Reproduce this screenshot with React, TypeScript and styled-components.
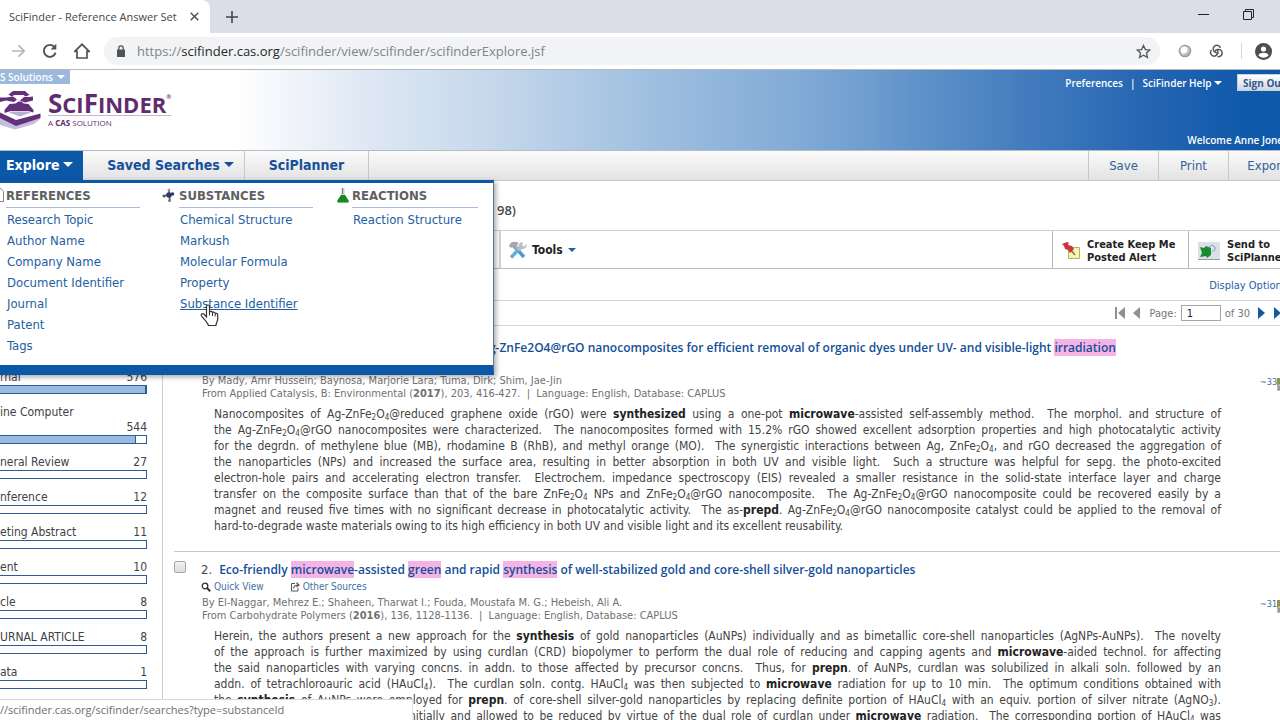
import React from "react";
import styled, { createGlobalStyle, css } from "styled-components";

const blue = "#0b57a8";
const link = "#24609f";
const ui = `"DejaVu Sans Condensed", "Noto Sans", "Liberation Sans", sans-serif`;
const chromeFont = `"Open Sans", "Noto Sans", sans-serif`;

const Global = createGlobalStyle`
  *, *::before, *::after { box-sizing: border-box; }
  html, body { margin: 0; height: 100%; }
  #root { height: 100%; }
  body { font-family: ${ui}; font-size: 12px; color: #444; background: #fff; }
  a { color: inherit; text-decoration: none; }
  button { font: inherit; color: inherit; background: none; border: 0; padding: 0; margin: 0; cursor: pointer; }
  h1, h2, h3, p, ul { margin: 0; padding: 0; font-weight: normal; }
  ul { list-style: none; }
`;

const Frame = styled.div`
  position: relative;
  display: flex;
  flex-direction: column;
  height: 100vh;
  overflow: hidden;
`;

/* browser window */

const TabStrip = styled.div`
  display: flex;
  flex: none;
  height: 33px;
  background: #dcdde6;
`;

const BrowserTab = styled.div`
  display: flex;
  align-items: center;
  justify-content: space-between;
  width: 210px;
  padding: 0 11px 0 9px;
  background: #fff;
  border-top-right-radius: 8px;
  font-family: ${chromeFont};
  font-size: 11px;
  color: #45474c;
  white-space: nowrap;
`;

const TabButton = styled.button`
  display: flex;
  align-items: center;
  justify-content: center;
`;

const NewTab = styled(TabButton)`
  width: 44px;
`;

const WindowButtons = styled.div`
  display: flex;
  align-items: center;
  gap: 34px;
  margin-left: auto;
  padding: 0 26px 5px 0;
`;

const AddressRow = styled.div`
  display: flex;
  align-items: center;
  flex: none;
  height: 37px;
  padding: 0 8px 0 11px;
  border-bottom: 1px solid #b5b8bd;
  background: #fff;
`;

const NavIcons = styled.div`
  display: flex;
  align-items: center;
  gap: 16px;
  margin-right: 14px;
`;

const AddressBar = styled.label`
  display: flex;
  align-items: center;
  flex: 1;
  gap: 11px;
  height: 28px;
  padding: 0 9px 0 12px;
  border-radius: 14px;
  background: #f1f3f4;
`;

const UrlText = styled.span`
  flex: 1;
  font-family: ${chromeFont};
  font-size: 13px;
  color: #80848a;
  white-space: nowrap;
  b { font-weight: normal; color: #26282b; }
`;

const Extensions = styled.div`
  display: flex;
  align-items: center;
  gap: 17px;
  margin-left: 18px;
`;

const ToolbarRule = styled.span`
  width: 1px;
  height: 16px;
  margin-right: -4px;
  background: #d4d6da;
`;

const StatusBubble = styled.div`
  position: absolute;
  left: 0;
  bottom: 0;
  width: 413px;
  height: 21px;
  border-top: 1px solid #d8d8d8;
  border-right: 1px solid #e4e4e4;
  background: #fff;
  font-family: ${chromeFont};
  font-size: 11px;
  line-height: 20px;
  color: #6b6e72;
  white-space: nowrap;
`;

/* site header */

const Site = styled.div`
  display: flex;
  flex-direction: column;
  flex: 1;
  min-height: 0;
  margin-right: -24px;
`;

const Header = styled.header`
  display: flex;
  justify-content: space-between;
  flex: none;
  height: 80px;
  background: linear-gradient(90deg, #fff 0, #fff 18%, #dfe8f4 28%, #c8d9ec 37%, #9fbfe0 50%, #7fa9d5 62%, #4f86c3 75%, #2867b3 87%, #0f58aa 96%, #0f58aa 100%);
`;

const Brand = styled.div`
  display: flex;
  flex-direction: column;
  align-items: flex-start;
`;

const Solutions = styled.button`
  display: flex;
  align-items: center;
  gap: 4px;
  height: 14px;
  padding: 0 5px 0 0;
  background: #9bb9dc;
  color: #fff;
  font-family: ${chromeFont};
  font-size: 10px;
  line-height: 14px;
  font-weight: 600;
`;

const Logo = styled.div`
  display: flex;
  gap: 7px;
  padding-top: 6px;
`;

const LogoText = styled.div`
  color: #5f2c6f;
  font-family: ${chromeFont};
`;

const LogoName = styled.div`
  display: flex;
  align-items: baseline;
  height: 26px;
  border-bottom: 1px solid #c3b7cc;
  font-size: 22px;
  line-height: 26px;
  font-weight: 700;
  big { font-size: 26px; line-height: 26px; font-weight: 700; }
  small { font-size: 6px; align-self: flex-start; line-height: 14px; }
`;

const LogoTag = styled.div`
  font-size: 8px;
  line-height: 13px;
`;

const Account = styled.div`
  display: flex;
  flex-direction: column;
  justify-content: space-between;
  align-items: flex-end;
  padding: 4px 5px 3px 0;
  color: #fff;
  font-family: ${chromeFont};
  font-size: 10px;
  font-weight: 600;
  line-height: 14px;
`;

const AccountLinks = styled.div`
  display: flex;
  align-items: center;
  gap: 7px;
  height: 17px;
`;

const Welcome = styled.div`
  padding-right: 11px;
`;

const SignOut = styled.button`
  width: 62px;
  height: 17px;
  margin-left: 8px;
  padding: 0 5px;
  background: linear-gradient(#fff, #cfd6e2);
  border: 1px solid #c4cfdf;
  color: #32588c;
  font-weight: 700;
  text-align: left;
`;

const MainNav = styled.nav`
  position: relative;
  display: flex;
  flex: none;
  height: 31px;
  border-top: 1px solid #b5bcc6;
  border-bottom: 1px solid #c9c9c9;
  background: linear-gradient(#fbfbfb, #e2e2e2);
`;

const NavTab = styled.button<{ $open?: boolean; $menu?: boolean; $width: number }>`
  display: flex;
  align-items: center;
  justify-content: center;
  gap: 4px;
  width: ${(p) => p.$width}px;
  padding: 0 0 2px ${(p) => (p.$menu ? 14 : 0)}px;
  border-right: 1px solid #c4c7cb;
  font-size: 14px;
  font-weight: bold;
  color: #17509a;
  white-space: nowrap;
  ${(p) => p.$open && css`
    background: ${blue};
    border-color: ${blue};
    color: #fff;
    justify-content: flex-start;
    padding-left: 6px;
  `}
`;

const NavActions = styled.div`
  display: flex;
  margin-left: auto;
`;

const NavAction = styled.button`
  width: 70px;
  padding-bottom: 1px;
  border-left: 1px solid #c4c7cb;
  font-size: 13px;
  color: #33619a;
  &:last-child { width: 76px; }
`;

const Caret = styled.span<{ $size?: number }>`
  display: inline-block;
  vertical-align: 2px;
  border: ${(p) => p.$size ?? 5}px solid transparent;
  border-top-color: currentColor;
  border-bottom: 0;
`;

/* explore menu */

const Menu = styled.div`
  position: absolute;
  z-index: 2;
  top: 29px;
  left: 0;
  display: flex;
  width: 494px;
  height: 195px;
  border-top: 3px solid ${blue};
  border-bottom: 10px solid ${blue};
  border-right: 1px solid #5f7896;
  background: #fff;
  box-shadow: 2px 2px 5px rgba(0, 0, 0, 0.35);
`;

const MenuHeading = styled.h2`
  position: relative;
  width: 134px;
  height: 20px;
  border-bottom: 1px solid #a9bcdb;
  font-size: 13px;
  font-weight: bold;
  line-height: 16px;
  color: #5f6062;
  svg { position: absolute; right: 100%; top: 0; }
`;

const MenuGroup = styled.section`
  flex: none;
  width: 173px;
  padding: 5px 0 0 16px;
  &:first-child { width: 163px; padding-left: 6px; }
  &:last-of-type { width: 157px; }
  &:last-of-type ${MenuHeading} { width: 126px; }
`;

const MenuLink = styled.a<{ $hover?: boolean }>`
  display: block;
  padding-left: 1px;
  font-size: 13px;
  line-height: 21px;
  color: ${link};
  text-decoration: ${(p) => (p.$hover ? "underline" : "none")};
`;

const MenuList = styled.ul`
  padding-top: 1px;
`;

const Pointer = styled.svg`
  position: absolute;
  left: 200px;
  top: 121px;
`;

/* body */

const Body = styled.div`
  display: flex;
  flex: 1;
  min-height: 0;
`;

const Sidebar = styled.aside`
  flex: none;
  width: 163px;
  padding: 189px 15px 0 0;
  border-right: 1px solid #ccc;
`;

const Facet = styled.div`
  margin-bottom: 11px;
  color: #3e4247;
  font-size: 12px;
  line-height: 15px;
`;

const FacetLine = styled.div<{ $stacked?: boolean }>`
  display: flex;
  flex-direction: ${(p) => (p.$stacked ? "column" : "row")};
  justify-content: space-between;
  white-space: nowrap;
  span:last-child { align-self: flex-end; }
`;

const Track = styled.div`
  height: 9px;
  border: 1px solid #2c5c92;
  border-left: 0;
`;

const Fill = styled.div`
  height: 7px;
  border-right: 1px solid #2c5c92;
  background: #9bbae2;
`;

const Main = styled.main`
  flex: 1;
  min-width: 0;
`;

const PageTitle = styled.h1`
  height: 50px;
  padding-left: 334px;
  border-bottom: 1px solid #d0d0d0;
  font-family: ${chromeFont};
  font-size: 13px;
  font-weight: 600;
  line-height: 58px;
  color: #4a4a4a;
`;

const Tools = styled.div`
  display: flex;
  height: 38px;
  border-bottom: 1px solid #bdbdbd;
  color: #222;
  font-size: 12px;
  font-weight: bold;
  line-height: 13px;
`;

const ToolsMenu = styled.button`
  display: flex;
  align-items: center;
  gap: 5px;
  margin-left: 336px;
  padding: 1px 0 0 8px;
  border-left: 2px solid #d4d4d4;
`;

const ToolButton = styled.button<{ $width: number }>`
  display: flex;
  align-items: center;
  gap: 7px;
  width: ${(p) => p.$width}px;
  padding: 3px 0 0 9px;
  border-left: 1px solid #b8b8b8;
  text-align: left;
  font-size: 11px;
`;

const ToolGroup = styled.div`
  display: flex;
  margin-left: auto;
`;

const DisplayOptions = styled.div`
  display: flex;
  justify-content: flex-end;
  height: 32px;
  padding-right: 17px;
  border-bottom: 1px solid #d4d4d4;
  font-size: 11px;
  line-height: 34px;
  color: ${link};
`;

const Pager = styled.div`
  display: flex;
  align-items: center;
  justify-content: flex-end;
  gap: 8px;
  height: 25px;
  padding-right: 20px;
  border-bottom: 1px solid #d4d4d4;
  font-size: 11px;
  color: #777;
  label { display: flex; align-items: center; gap: 4px; }
`;

const PageTotal = styled.span`
  margin-left: -4px;
`;

const PageInput = styled.input`
  width: 40px;
  height: 16px;
  padding: 0 5px;
  border: 1px solid #a5a5a5;
  font: inherit;
  color: #222;
`;

const PagerButton = styled.button`
  display: flex;
`;

const Result = styled.article`
  display: flex;
  margin-left: 11px;
  padding: 9px 0 17px;
  border-bottom: 1px solid #c8c8c8;
  &:first-of-type { padding-top: 13px; }
`;

const Check = styled.input`
  flex: none;
  appearance: none;
  width: 12px;
  height: 12px;
  margin: 0 15px 0 0;
  border: 1px solid #a8a8a8;
  border-radius: 2px;
  background: linear-gradient(#f2f2f2, #dcdcdc);
`;

const ResultText = styled.div`
  flex: 1;
  min-width: 0;
`;

const ResultTitle = styled.h2`
  display: flex;
  gap: 7px;
  font-size: 13px;
  line-height: 17px;
  white-space: nowrap;
  color: #444;
  a { color: #134f98; font-family: ${chromeFont}; font-size: 12px; font-weight: 600; }
  mark { background: #f6b3e6; color: inherit; }
`;

const QuickLinks = styled.div`
  display: flex;
  gap: 26px;
  height: 18px;
  font-size: 10px;
  line-height: 17px;
  color: #44719f;
  a { display: flex; align-items: center; gap: 3px; height: 17px; }
`;

const Meta = styled.p`
  font-size: 11px;
  line-height: 13px;
  color: #707070;
  padding-left: 1px;
  white-space: nowrap;
`;

const Source = styled(Meta)`
  margin-bottom: 6px;
`;

const Abstract = styled.p`
  padding-left: 13px;
  font-size: 12px;
  line-height: 16px;
  color: #444;
  b { color: #222; }
  sub { font-size: 8px; line-height: 0; vertical-align: -2px; }
`;

const Line = styled.span<{ $last?: boolean }>`
  display: block;
  text-align: justify;
  text-align-last: ${(p) => (p.$last ? "left" : "justify")};
`;

const Citing = styled.a`
  display: flex;
  flex: none;
  align-items: flex-start;
  width: 83px;
  padding: 38px 0 0 39px;
  font-size: 9px;
  line-height: 10px;
  color: #44719f;
`;

const Fe = () => <>ZnFe<sub>2</sub>O<sub>4</sub></>;
const Gold = () => <>HAuCl<sub>4</sub></>;
const gap = "\u00a0 ";

const facets: { label: string; count: number; fill: number; stacked?: boolean }[] = [
  { label: "rnal", count: 576, fill: 100 },
  { label: "ine Computer", count: 544, fill: 93, stacked: true },
  { label: "neral Review", count: 27, fill: 0 },
  { label: "nference", count: 12, fill: 0 },
  { label: "eting Abstract", count: 11, fill: 0 },
  { label: "ent", count: 10, fill: 0 },
  { label: "cle", count: 8, fill: 0 },
  { label: "URNAL ARTICLE", count: 8, fill: 0 },
  { label: "ata", count: 1, fill: 0 },
];

const first: React.ReactNode[] = [
  <>Nanocomposites of Ag-<Fe />@reduced graphene oxide (rGO) were <b>synthesized</b> using a one-pot <b>microwave</b>-assisted self-assembly method.{gap}The morphol. and structure of</>,
  <>the Ag-<Fe />@rGO nanocomposites were characterized.{gap}The nanocomposites formed with 15.2% rGO showed excellent adsorption properties and high photocatalytic activity</>,
  <>for the degrdn. of methylene blue (MB), rhodamine B (RhB), and methyl orange (MO).{gap}The synergistic interactions between Ag, <Fe />, and rGO decreased the aggregation of</>,
  <>the nanoparticles (NPs) and increased the surface area, resulting in better absorption in both UV and visible light.{gap}Such a structure was helpful for sepg. the photo-excited</>,
  <>electron-hole pairs and accelerating electron transfer.{gap}Electrochem. impedance spectroscopy (EIS) revealed a smaller resistance in the solid-state interface layer and charge</>,
  <>transfer on the composite surface than that of the bare <Fe /> NPs and <Fe />@rGO nanocomposite.{gap}The Ag-<Fe />@rGO nanocomposite could be recovered easily by a</>,
  <>magnet and reused five times with no significant decrease in photocatalytic activity.{gap}The as-<b>prepd</b>. Ag-<Fe />@rGO nanocomposite catalyst could be applied to the removal of</>,
  <>hard-to-degrade waste materials owing to its high efficiency in both UV and visible light and its excellent reusability.</>,
];

const second: React.ReactNode[] = [
  <>Herein, the authors present a new approach for the <b>synthesis</b> of gold nanoparticles (AuNPs) individually and as bimetallic core-shell nanoparticles (AgNPs-AuNPs).{gap}The novelty</>,
  <>of the approach is further maximized by using curdlan (CRD) biopolymer to perform the dual role of reducing and capping agents and <b>microwave</b>-aided technol. for affecting</>,
  <>the said nanoparticles with varying concns. in addn. to those affected by precursor concns.{gap}Thus, for <b>prepn</b>. of AuNPs, curdlan was solubilized in alkali soln. followed by an</>,
  <>addn. of tetrachloroauric acid (<Gold />).{gap}The curdlan soln. contg. <Gold /> was then subjected to <b>microwave</b> radiation for up to 10 min.{gap}The optimum conditions obtained with</>,
  <>the <b>synthesis</b> of AuNPs were employed for <b>prepn</b>. of core-shell silver-gold nanoparticles by replacing definite portion of <Gold /> with an equiv. portion of silver nitrate (AgNO<sub>3</sub>).</>,
  <>The portion of AgNO<sub>3</sub> was added initially and allowed to be reduced by virtue of the dual role of curdlan under <b>microwave</b> radiation.{gap}The corresponding portion of <Gold /> was</>,
];

const Lines = ({ lines, open }: { lines: React.ReactNode[]; open?: boolean }) => (
  <Abstract>
    {lines.map((l, i) => <Line key={i} $last={!open && i === lines.length - 1}>{l}</Line>)}
  </Abstract>
);

const LensIcon = () => (
  <svg width="10" height="10" viewBox="0 0 10 10" fill="none" stroke="#333">
    <circle cx="4" cy="4" r="2.8" strokeWidth="1.3" /><path d="M6 6l3.2 3.2" strokeWidth="2" />
  </svg>
);

const SourceIcon = () => (
  <svg width="10" height="10" viewBox="0 0 10 10" fill="none" stroke="#555">
    <path d="M5 1.500H1.500V9H8V6" /><path d="M3.500 6.500C4 4 5.500 3 8 3M6.500 .8L9 3 6.500 5" strokeWidth="1.200" />
  </svg>
);

const CitingIcon = () => (
  <svg width="14" height="16" viewBox="0 0 14 16">
    <path d="M0 4l3-3h9v13H0z" fill="#b9b9c4" /><path d="M0 1h9v6H2L0 9z" fill="#9a9344" /><path d="M1 10h10M1 12h10" stroke="#777" />
  </svg>
);

const PagerIcon = ({ back, edge }: { back?: boolean; edge?: boolean }) => (
  <svg width={edge ? 10 : 8} height="14" viewBox={edge ? "0 0 10 14" : "0 0 8 14"} fill={back ? "#8e9092" : "#12599f"}>
    {back
      ? <><path d={edge ? "M10 1v12L3 7z" : "M7 1v12L0 7z"} />{edge && <path d="M0 1h2v12H0z" />}</>
      : <><path d="M0 1v12l7-6z" />{edge && <path d="M8 1h2v12H8z" />}</>}
  </svg>
);

export default function App() {
  return (
    <Frame>
      <Global />
      <TabStrip>
        <BrowserTab>
          <span>SciFinder - Reference Answer Set</span>
          <TabButton aria-label="Close tab">
            <svg width="9" height="9" viewBox="0 0 9 9" stroke="#4a4d52" strokeWidth="1.400"><path d="M.7.7l7.600 7.600M8.300.7L.7 8.300" /></svg>
          </TabButton>
        </BrowserTab>
        <NewTab aria-label="New tab">
          <svg width="12" height="12" viewBox="0 0 12 12" stroke="#44474c" strokeWidth="1.600"><path d="M6 0v12M0 6h12" /></svg>
        </NewTab>
        <WindowButtons>
          <TabButton aria-label="Minimize">
            <svg width="11" height="11" viewBox="0 0 11 11" stroke="#222"><path d="M0 5.500h11" /></svg>
          </TabButton>
          <TabButton aria-label="Restore">
            <svg width="11" height="11" viewBox="0 0 11 11" stroke="#222" fill="none"><path d="M.5 2.500h8v8h-8zM2.500 2.500v-2h8v8h-2" /></svg>
          </TabButton>
        </WindowButtons>
      </TabStrip>
      <AddressRow>
        <NavIcons>
          <TabButton aria-label="Forward">
            <svg width="15" height="14" viewBox="0 0 15 14" fill="none" stroke="#b4b6b9" strokeWidth="1.700"><path d="M1 7h12M7.500 1.300L13.200 7l-5.700 5.700" /></svg>
          </TabButton>
          <TabButton aria-label="Reload">
            <svg width="16" height="16" viewBox="0 0 16 16" fill="none" stroke="#4f5257" strokeWidth="1.900"><path d="M13.600 9.600A6 6 0 1 1 12.400 3.900" /><path d="M14.300 .8V6.500H8.600z" fill="#4f5257" stroke="none" /></svg>
          </TabButton>
          <TabButton aria-label="Home">
            <svg width="16" height="16" viewBox="0 0 16 16" fill="none" stroke="#4f5257" strokeWidth="1.700"><path d="M.8 8.300L8 1.300l7.200 7H13V15H3V8.300z" /></svg>
          </TabButton>
        </NavIcons>
        <AddressBar>
          <svg width="10" height="12" viewBox="0 0 10 12"><path d="M1 4.500h8V12H1z" fill="#505358" /><path d="M2.800 5V3a2.200 2.200 0 0 1 4.400 0v2" fill="none" stroke="#505358" strokeWidth="1.300" /></svg>
          <UrlText>https://<b>scifinder.cas.org</b>/scifinder/view/scifinder/scifinderExplore.jsf</UrlText>
          <svg width="15" height="15" viewBox="0 0 16 16" fill="none" stroke="#55585d" strokeWidth="1.400"><path d="M8 1.500l2 4.400 4.700.5-3.500 3.200 1 4.700L8 11.900l-4.200 2.400 1-4.700L1.300 6.400 6 5.900z" /></svg>
        </AddressBar>
        <Extensions>
          <svg width="14" height="14" viewBox="0 0 14 14"><circle cx="7" cy="7" r="5.500" fill="#ddd" stroke="#9c9c9c" strokeWidth="1.600" /><circle cx="5.800" cy="5.800" r="3.200" fill="#fff" /><path d="M11 6a5 5 0 0 1-5 5" stroke="#b5b5b5" strokeWidth="2" fill="none" /></svg>
          <svg width="15" height="15" viewBox="0 0 15 15" fill="none" stroke="#55585d" strokeWidth="1.500" strokeLinecap="round">
            {[0, 120, 240].map((r) => <path key={r} transform={`rotate(${r} 7.5 7.5)`} d="M8.800 9.200C5.600 8.800 3.200 6 4.600 3.200 6 .6 10 .8 11.200 3.400" />)}
          </svg>
          <ToolbarRule />
          <svg width="17" height="17" viewBox="0 0 17 17"><circle cx="8.500" cy="8.500" r="8.500" fill="#4b4e53" /><circle cx="8.500" cy="6" r="2.600" fill="#fff" /><path d="M3.300 12.300c1.200-3.300 9.200-3.300 10.400 0-2.400 3.200-8 3.200-10.400 0z" fill="#fff" /></svg>
        </Extensions>
      </AddressRow>

      <Site>
        <Header>
          <Brand>
            <Solutions>S Solutions <Caret $size={4} /></Solutions>
            <Logo>
              <svg width="41" height="40" viewBox="0 0 41 40">
                <path d="M0 27l16 6 24-7v3l-6 5-19 5.500L0 35z" fill="#c5bddd" />
                <path d="M8.500 4.500L13 1h12l4.500 4-4 1.500-2-1.500h-9l-3 1.500z" fill="#65307a" />
                <path d="M0 7.500h6l7-1 4 3-3 2.500L6 10.500 0 12z" fill="#65307a" />
                <path d="M20 10.500L24 7h5l4-.5v4L25 12.500z" fill="#65307a" />
                <path d="M4.500 20l5-6 6-.5 3-2h3l2 2 5 .5 5 6v2.500L28 21H11l-6.500 2z" fill="#65307a" />
                <path d="M9 22.500l3-1h15l4 1-11 4z" fill="#b9afd4" />
                <path d="M0 22.500l16 7.500 24.500-6.500v4.500L16 36 0 28z" fill="#65307a" />
              </svg>
              <LogoText>
                <LogoName><big>S</big>CI<big>F</big>INDER<small>®</small></LogoName>
                <LogoTag>A <b>CAS</b> SOLUTION</LogoTag>
              </LogoText>
            </Logo>
          </Brand>
          <Account>
            <AccountLinks>
              <a href="#preferences">Preferences</a>
              <span>|</span>
              <a href="#help">SciFinder Help <Caret $size={4} /></a>
              <SignOut>Sign Out</SignOut>
            </AccountLinks>
            <Welcome>Welcome Anne Jones</Welcome>
          </Account>
        </Header>

        <MainNav>
          <NavTab $open $width={83}>Explore <Caret /></NavTab>
          <NavTab $menu $width={162}>Saved Searches <Caret /></NavTab>
          <NavTab $width={124}>SciPlanner</NavTab>
          <NavActions>
            <NavAction>Save</NavAction>
            <NavAction>Print</NavAction>
            <NavAction>Export</NavAction>
          </NavActions>
          <Menu>
            <MenuGroup>
              <MenuHeading>
                <svg width="12" height="14" viewBox="0 0 12 14"><path d="M2 .5h5l2.500 3v10H2z" fill="#fff" stroke="#888" /></svg>
                REFERENCES
              </MenuHeading>
              <MenuList>
                {["Research Topic", "Author Name", "Company Name", "Document Identifier", "Journal", "Patent", "Tags"].map((t) => (
                  <li key={t}><MenuLink href="#">{t}</MenuLink></li>
                ))}
              </MenuList>
            </MenuGroup>
            <MenuGroup>
              <MenuHeading>
                <svg width="17" height="15" viewBox="0 0 17 15" fill="#2c3e66">
                  <path d="M7 6.500L2 8M7 6.500V2M7 6.500l4-1M7 6.500l1 6" strokeWidth="1.600" stroke="#555" />
                  <circle cx="7" cy="7" r="2.800" /><circle cx="2" cy="8" r="1.500" fill="#555" /><circle cx="10.500" cy="6" r="1.800" /><circle cx="7" cy="2" r="1.500" fill="#999" /><circle cx="7.500" cy="12.500" r="1.500" fill="#777" />
                </svg>
                SUBSTANCES
              </MenuHeading>
              <MenuList>
                {["Chemical Structure", "Markush", "Molecular Formula", "Property", "Substance Identifier"].map((t) => (
                  <li key={t}><MenuLink href="#" $hover={t === "Substance Identifier"}>{t}</MenuLink></li>
                ))}
              </MenuList>
            </MenuGroup>
            <MenuGroup>
              <MenuHeading>
                <svg width="15" height="15" viewBox="0 0 15 15"><path d="M4.500 0h3v6l4 6.500c.6 1.500 0 2-1 2h-9c-1 0-1.600-.5-1-2l4-6.500z" fill="#c3d8c3" /><path d="M4 7h4l3.500 5.500c.6 1.500 0 2-1 2h-9c-1 0-1.600-.5-1-2z" fill="#178a1d" /><path d="M5.500 0v6" stroke="#777" /></svg>
                REACTIONS
              </MenuHeading>
              <MenuList>
                <li><MenuLink href="#">Reaction Structure</MenuLink></li>
              </MenuList>
            </MenuGroup>
            <Pointer width="19" height="23" viewBox="0 0 19 23">
              <path d="M6.500 13V2.500c0-2 3-2 3 0V8c1-1 2.800-.7 3 .6 1-.8 2.500-.3 2.700.9 1.300-.6 2.500.2 2.500 1.500V15c0 2.500-1.700 3.500-1.700 6.500H8.500c-.5-2-2-3.500-3.500-5.500L1.500 11.800c-1-1.500.8-3 2.300-1.800z" fill="#fff" stroke="#333" strokeWidth="1.200" />
              <path d="M9.500 8v3.500M12.500 9v3M15.200 10v2.500" stroke="#333" />
            </Pointer>
          </Menu>
        </MainNav>

        <Body>
          <Sidebar>
            {facets.map((f) => (
              <Facet key={f.label}>
                <FacetLine $stacked={f.stacked}><span>{f.label}</span><span>{f.count}</span></FacetLine>
                <Track>{f.fill > 0 && <Fill style={{ width: `${f.fill}%` }} />}</Track>
              </Facet>
            ))}
          </Sidebar>
          <Main>
            <PageTitle>98)</PageTitle>
            <Tools>
              <ToolsMenu>
                <svg width="18" height="18" viewBox="0 0 18 18" fill="none">
                  <path d="M4 4l11 12" stroke="#4f9bd3" strokeWidth="3.500" /><path d="M13 5L2 16.500" stroke="#62addf" strokeWidth="3.500" />
                  <path d="M0 5C1 1 6-.5 9.500 2L8 4.500l1 3-2 1.500-3-4-2 2z" fill="#a8a8a8" /><path d="M11 1.500l3 0-1 3 3 1 1-3c2 3-1 6-4 5.500l-3 2-2-2z" fill="#bdbdbd" />
                </svg>
                Tools <Caret $size={4} style={{ color: link }} />
              </ToolsMenu>
              <ToolGroup>
                <ToolButton $width={136}>
                  <svg width="18" height="18" viewBox="0 0 18 18"><path d="M6.500 5.500h11v11h-11z" fill="#fbf3a6" stroke="#b5ad74" /><path d="M8 7l5 6" stroke="#777" strokeWidth="1.500" /><path d="M0 2l5-2 2 1-1 2 4 1 2 3-4 4-2-3-3-1-1-3z" fill="#c8363f" /></svg>
                  <span>Create Keep Me<br />Posted Alert</span>
                </ToolButton>
                <ToolButton $width={116}>
                  <svg width="22" height="18" viewBox="0 0 22 18"><path d="M0 0h22v18H0z" fill="#dcdfe6" /><path d="M0 17.500h22" stroke="#999" /><path d="M2 5l4 1 2-2 5 2v7l-4 3-1-2-6 1 2-4z" fill="#198c32" /><path d="M11 5l3-2 3 2v3l-3 2" stroke="#7d9fdc" fill="none" /></svg>
                  <span>Send to<br />SciPlanner</span>
                </ToolButton>
              </ToolGroup>
            </Tools>
            <DisplayOptions><a href="#display">Display Options</a></DisplayOptions>
            <Pager>
              <PagerButton aria-label="First page"><PagerIcon back edge /></PagerButton>
              <PagerButton aria-label="Previous page"><PagerIcon back /></PagerButton>
              <label>Page: <PageInput defaultValue="1" /></label>
              <PageTotal>of 30</PageTotal>
              <PagerButton aria-label="Next page"><PagerIcon /></PagerButton>
              <PagerButton aria-label="Last page"><PagerIcon edge /></PagerButton>
            </Pager>

            <Result>
              <Check type="checkbox" aria-label="Select result 1" />
              <ResultText>
                <ResultTitle>
                  <span>1.</span>
                  <a href="#1">Facile <mark>microwave</mark>-assisted <mark>green</mark> <mark>synthesis</mark> of Ag-ZnFe2O4@rGO nanocomposites for efficient removal of organic dyes under UV- and visible-light <mark>irradiation</mark></a>
                </ResultTitle>
                <QuickLinks>
                  <a href="#quick"><LensIcon /> Quick View</a>
                  <a href="#sources"><SourceIcon /> Other Sources</a>
                </QuickLinks>
                <Meta>By Mady, Amr Hussein; Baynosa, Marjorie Lara; Tuma, Dirk; Shim, Jae-Jin</Meta>
                <Source>From Applied Catalysis, B: Environmental (<b>2017</b>), 203, 416-427. &nbsp;|&nbsp; Language: English, Database: CAPLUS</Source>
                <Lines lines={first} />
              </ResultText>
              <Citing href="#citing">~33<CitingIcon /></Citing>
            </Result>

            <Result>
              <Check type="checkbox" aria-label="Select result 2" />
              <ResultText>
                <ResultTitle>
                  <span>2.</span>
                  <a href="#2">Eco-friendly <mark>microwave</mark>-assisted <mark>green</mark> and rapid <mark>synthesis</mark> of well-stabilized gold and core-shell silver-gold nanoparticles</a>
                </ResultTitle>
                <QuickLinks>
                  <a href="#quick"><LensIcon /> Quick View</a>
                  <a href="#sources"><SourceIcon /> Other Sources</a>
                </QuickLinks>
                <Meta>By El-Naggar, Mehrez E.; Shaheen, Tharwat I.; Fouda, Moustafa M. G.; Hebeish, Ali A.</Meta>
                <Source>From Carbohydrate Polymers (<b>2016</b>), 136, 1128-1136. &nbsp;|&nbsp; Language: English, Database: CAPLUS</Source>
                <Lines lines={second} open />
              </ResultText>
              <Citing href="#citing">~31<CitingIcon /></Citing>
            </Result>
          </Main>
        </Body>
      </Site>

      <StatusBubble>//scifinder.cas.org/scifinder/searches?type=substanceId</StatusBubble>
    </Frame>
  );
}
